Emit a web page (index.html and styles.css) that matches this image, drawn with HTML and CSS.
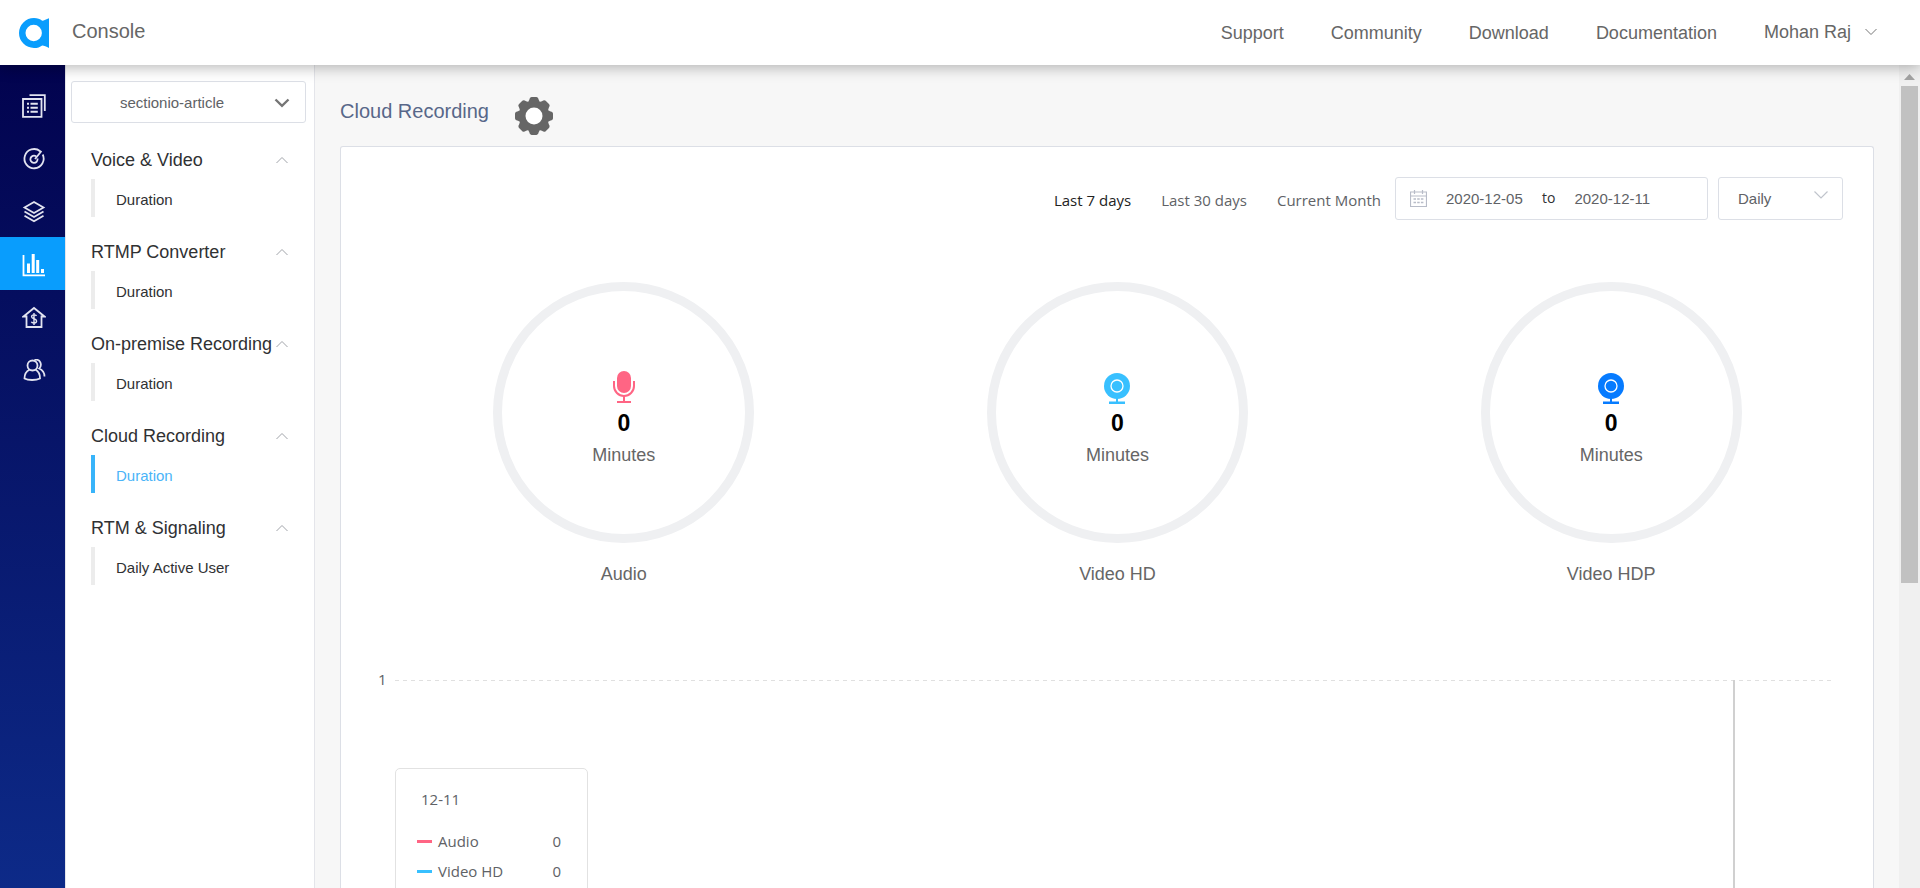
FILE: index.html
```html
<!DOCTYPE html>
<html lang="en">
<head>
<meta charset="utf-8">
<title>Console</title>
<link rel="stylesheet" href="styles.css">
</head>
<body>
<header class="topbar">
  <a class="brand" href="#" aria-label="Home">
    <svg width="30" height="30" viewBox="0 0 30 30"><path fill="#099dfd" fill-rule="evenodd" d="M15 0C18.500 0 21 1 23.200 2.700C25 2.600 27.500 1.500 30 .3V29.900C27.500 28.700 25 27.500 23.200 27.400C21 29 18.500 30 15 30A15 15 0 0 1 15 0ZM14.700 6.800A8.200 8.200 0 1 0 14.700 23.200A8.200 8.200 0 0 0 14.700 6.800Z"/></svg>
  </a>
  <span class="product">Console</span>
  <nav class="topnav">
    <a href="#">Support</a>
    <a href="#">Community</a>
    <a href="#">Download</a>
    <a href="#">Documentation</a>
    <button class="account" type="button">Mohan Raj
      <svg width="12" height="8" viewBox="0 0 12 8"><path d="M.5 1L6 6.500L11.500 1" fill="none" stroke="#777"/></svg>
    </button>
  </nav>
</header>
<div class="shell">
  <nav class="rail" aria-label="Sections">
    <a href="#" aria-label="Projects"><svg width="24" height="24" viewBox="0 0 24 24"><path d="M7.500 1.200H22.800V17M1 5H19.500V22.800H1Z"/><path d="M5 9.800H7M8.500 9.800H15.800M5 13.800H7M8.500 13.800H15.800M5 17.800H7M8.500 17.800H15.800" stroke-width="2"/></svg></a>
    <a href="#" aria-label="Dashboard"><svg width="24" height="24" viewBox="0 0 24 24"><path d="M18.200 4.300A9.600 9.600 0 1 0 20.700 7.500M14 9.300A3.600 3.600 0 1 0 15.500 11.500M13 12L19.500 4"/></svg></a>
    <a href="#" aria-label="Products"><svg width="24" height="24" viewBox="0 0 24 24"><path d="M12 2L21.500 7.500L12 13L2.500 7.500ZM2.500 11.500L12 17L21.500 11.500M2.500 15.800L12 21.300L21.500 15.800"/></svg></a>
    <a class="current" href="#" aria-label="Usage"><svg width="24" height="24" viewBox="0 0 24 24"><path d="M1.500 2V22.300H23"/><path d="M6.500 10.500V20M11.200 1V20M15.700 7V20M20.500 16V20" stroke-width="3"/></svg></a>
    <a href="#" aria-label="Billing"><svg width="24" height="24" viewBox="0 0 24 24"><path d="M4.500 10.500H1.500L12 2L22.500 10.500H19.500V21H4.500Z"/><path d="M14.500 9.800C13.800 8.600 9.600 8.300 9.600 10.700C9.600 13.200 14.600 12.300 14.600 15C14.600 17.600 10 17.400 9.300 15.800M12 7V19" stroke-width="1.400"/></svg></a>
    <a href="#" aria-label="Members"><svg width="24" height="24" viewBox="0 0 24 24"><path d="M10.500 1.500A5 5 0 1 1 10.500 11.500A5 5 0 1 1 10.500 1.500M7.500 10.800C4 12.500 2.500 15.500 2.500 19.500C6 21.500 14 21.500 18 19.500C18 15.500 17 12.500 13.500 10.800M12.500 .9C18.500 -.4 20.500 6 17.200 9.500C20.500 11 22.500 14 22.500 17.500"/></svg></a>
  </nav>
  <aside class="sidebar">
    <div class="project">
      <select class="project-select" aria-label="Project"><option>sectionio-article</option></select>
      <svg class="project-arrow" width="16" height="10" viewBox="0 0 16 10"><path d="M1.500 1.500L8 7.800L14.500 1.500" fill="none" stroke="#757575" stroke-width="2.400"/></svg>
    </div>
    <ul class="menu">
      <li class="group"><button class="group-head" type="button">Voice &amp; Video<svg width="12" height="8" viewBox="0 0 12 8"><path d="M.5 7L6 1.500L11.500 7"/></svg></button><a class="entry" href="#">Duration</a></li>
      <li class="group"><button class="group-head" type="button">RTMP Converter<svg width="12" height="8" viewBox="0 0 12 8"><path d="M.5 7L6 1.500L11.500 7"/></svg></button><a class="entry" href="#">Duration</a></li>
      <li class="group"><button class="group-head" type="button">On-premise Recording<svg width="12" height="8" viewBox="0 0 12 8"><path d="M.5 7L6 1.500L11.500 7"/></svg></button><a class="entry" href="#">Duration</a></li>
      <li class="group"><button class="group-head" type="button">Cloud Recording<svg width="12" height="8" viewBox="0 0 12 8"><path d="M.5 7L6 1.500L11.500 7"/></svg></button><a class="entry selected" href="#">Duration</a></li>
      <li class="group"><button class="group-head" type="button">RTM &amp; Signaling<svg width="12" height="8" viewBox="0 0 12 8"><path d="M.5 7L6 1.500L11.500 7"/></svg></button><a class="entry" href="#">Daily Active User</a></li>
    </ul>
  </aside>
  <main class="content">
    <div class="title-row">
      <h1>Cloud Recording</h1>
      <button class="settings" type="button" aria-label="Settings">
        <svg width="38" height="38" viewBox="-19 -19 38 38"><g fill="#666"><circle r="14.500"/><path id="tooth" d="M-7-12L-4.800-16Q-4.300-19-2.500-19H2.500Q4.300-19 4.800-16L7-12Z"/><use href="#tooth" transform="rotate(45)"/><use href="#tooth" transform="rotate(90)"/><use href="#tooth" transform="rotate(135)"/><use href="#tooth" transform="rotate(180)"/><use href="#tooth" transform="rotate(225)"/><use href="#tooth" transform="rotate(270)"/><use href="#tooth" transform="rotate(315)"/></g><circle r="8.500" fill="#fff"/></svg>
      </button>
    </div>
    <section class="card">
      <div class="toolbar">
        <div class="presets">
          <button class="preset chosen" type="button">Last 7 days</button>
          <button class="preset" type="button">Last 30 days</button>
          <button class="preset" type="button">Current Month</button>
        </div>
        <div class="range">
          <svg width="17" height="17" viewBox="0 0 17 17"><path d="M.5 2H16.500V16.500H.5ZM.5 6H16.500M4.500 0V4M12.500 0V4" fill="none" stroke="#b8bcc8" stroke-width="1.200"/><path d="M3.500 9H13.500M3.500 12.500H13.500" stroke="#b8bcc8" stroke-width="1.600" stroke-dasharray="2.500 1.200"/></svg>
          <input type="text" value="2020-12-05" aria-label="Start date">
          <span>to</span>
          <input type="text" value="2020-12-11" aria-label="End date">
        </div>
        <div class="interval">
          <select class="interval-select" aria-label="Interval"><option>Daily</option></select>
          <svg class="interval-arrow" width="14" height="8" viewBox="0 0 14 8"><path d="M.5 .5L7 7L13.500 .5" fill="none" stroke="#c0c4cc" stroke-width="1.200"/></svg>
        </div>
      </div>
      <div class="gauges">
        <figure class="gauge">
          <div class="ring">
            <svg width="28" height="34" viewBox="0 0 28 34" fill="#ff6584"><rect x="7" y="1" width="14" height="22" rx="7"/><path d="M4 11V16A10 10 0 0 0 24 16V11" fill="none" stroke="#ff6584" stroke-width="2"/><path d="M13 26H15V31H21V33H7V31H13Z"/></svg>
            <strong>0</strong><span>Minutes</span>
          </div>
          <figcaption>Audio</figcaption>
        </figure>
        <figure class="gauge">
          <div class="ring">
            <svg width="28" height="34" viewBox="0 0 28 34" fill="#38c0ff"><circle cx="14" cy="16" r="13"/><circle cx="14" cy="16" r="6" fill="none" stroke="#fff" stroke-width="1.300"/><path d="M13 28H15V31.500H22V34H6V31.500H13Z"/></svg>
            <strong>0</strong><span>Minutes</span>
          </div>
          <figcaption>Video HD</figcaption>
        </figure>
        <figure class="gauge">
          <div class="ring">
            <svg width="28" height="34" viewBox="0 0 28 34" fill="#067bff"><circle cx="14" cy="16" r="13"/><circle cx="14" cy="16" r="6" fill="none" stroke="#fff" stroke-width="1.300"/><path d="M13 28H15V31.500H22V34H6V31.500H13Z"/></svg>
            <strong>0</strong><span>Minutes</span>
          </div>
          <figcaption>Video HDP</figcaption>
        </figure>
      </div>
      <div class="chart">
        <span class="tick">1</span>
        <div class="plot">
          <svg class="gridline" width="100%" height="1"><line x1="0" y1="0" x2="100%" y2="0" stroke="#e0e0e0" stroke-width="2" stroke-dasharray="4 4"/></svg>
          <div class="pointer"></div>
          <div class="tooltip">
            <div class="tooltip-date">12-11</div>
            <div class="tooltip-row"><i class="swatch audio"></i>Audio<b>0</b></div>
            <div class="tooltip-row"><i class="swatch hd"></i>Video HD<b>0</b></div>
          </div>
        </div>
      </div>
    </section>
  </main>
  <div class="scrollbar">
    <svg width="11" height="6" viewBox="0 0 11 6"><path d="M0 6L5.500 0L11 6Z" fill="#a3a3a3"/></svg>
    <div class="thumb"></div>
  </div>
</div>
</body>
</html>
```
FILE: styles.css
```css
* { box-sizing: border-box; }
body {
  margin: 0;
  height: 100vh;
  display: flex;
  flex-direction: column;
  overflow: hidden;
  font-family: "Liberation Sans", Arial, sans-serif;
  font-size: 15px;
  color: #606266;
  background: #fff;
}
a { color: inherit; text-decoration: none; }
button, select, input {
  margin: 0;
  padding: 0;
  border: 0;
  background: none;
  font: inherit;
  color: inherit;
}
select { appearance: none; }
svg { display: block; flex: none; }

.topbar {
  position: relative;
  z-index: 2;
  flex: none;
  height: 65px;
  padding: 0 43px 0 19px;
  display: flex;
  align-items: center;
  background: #fff;
  box-shadow: 0 2px 14px rgba(0, 0, 0, .3);
}
.product { margin-left: 23px; padding-bottom: 2px; font-size: 20px; color: #666; }
.topnav {
  margin-left: auto;
  padding-top: 1px;
  display: flex;
  align-items: center;
  gap: 47px;
  font-size: 18px;
  color: #666;
}
.account { display: flex; align-items: center; gap: 14px; padding-bottom: 2px; }

.shell { flex: 1; min-height: 0; display: flex; }
.rail {
  flex: none;
  width: 65px;
  padding-top: 13px;
  background: linear-gradient(#02034f, #0d2a88);
}
.rail a {
  height: 53px;
  padding: 3px 0 0 2px;
  display: flex;
  align-items: center;
  justify-content: center;
}
.rail .current { background: #099dfd; }
.rail svg { fill: none; stroke: #e2e3f0; stroke-width: 1.8; }
.rail .current svg { stroke: #fff; }

.sidebar {
  flex: none;
  width: 250px;
  padding: 16px 8px 0 5px;
  border: solid #e4e5ea;
  border-width: 0 1px;
}
.project { position: relative; }
.project-select {
  width: 100%;
  height: 42px;
  padding-right: 33px;
  border: 1px solid #dcdfe6;
  border-radius: 3px;
  background: #fff;
  text-align-last: center;
}
.project-arrow { position: absolute; right: 16px; top: 17px; pointer-events: none; }
.menu { list-style: none; margin: 18px 0 0; padding: 0 18px 0 20px; }
.group { height: 92px; }
.group-head {
  width: 100%;
  height: 38px;
  display: flex;
  align-items: center;
  justify-content: space-between;
  font-size: 18px;
  color: #303133;
}
.group-head svg { fill: none; stroke: #a0a3a9; }
.entry {
  height: 38px;
  padding: 2px 0 0 21px;
  display: flex;
  align-items: center;
  border-left: 4px solid #ececec;
  color: #303133;
}
.entry.selected { border-color: #38b4fa; color: #4ab4f8; }

.content {
  flex: 1;
  min-width: 0;
  padding: 0 25px;
  display: flex;
  flex-direction: column;
  background: #f7f7f7;
}
.title-row {
  flex: none;
  height: 81px;
  padding-top: 32px;
  display: flex;
  align-items: flex-start;
  gap: 26px;
}
.title-row h1 {
  margin: 0;
  font-size: 20px;
  line-height: 28px;
  font-weight: normal;
  color: #586789;
}
.card {
  flex: 1;
  min-height: 0;
  padding-top: 30px;
  display: flex;
  flex-direction: column;
  border: 1px solid #dcdfe6;
  border-bottom: 0;
  border-radius: 3px 3px 0 0;
  background: #fff;
}
.toolbar {
  flex: none;
  padding-right: 30px;
  display: flex;
  justify-content: flex-end;
  gap: 10px;
}
.presets {
  display: flex;
  align-items: center;
  gap: 30px;
  padding: 3px 4px 0 0;
  font-family: "Open Sans", "Noto Sans", sans-serif;
}
.preset.chosen { color: #222; }
.range, .interval-select {
  height: 43px;
  border: 1px solid #dcdfe6;
  border-radius: 3px;
  background: #fff;
}
.range { width: 313px; padding-left: 14px; display: flex; align-items: center; }
.range input { width: 96px; padding-left: 19px; }
.range span {
  padding: 0 0 3px 19px;
  font-family: "Open Sans", "Noto Sans", sans-serif;
  font-size: 14px;
  color: #303133;
}
.interval { position: relative; width: 125px; }
.interval-select { width: 100%; padding-left: 19px; }
.interval-arrow { position: absolute; right: 15px; top: 14px; pointer-events: none; }

.gauges {
  flex: none;
  margin-top: 62px;
  padding: 0 15px 0 36px;
  display: grid;
  grid-template-columns: repeat(3, 1fr);
  font-size: 18px;
  line-height: 24px;
  color: #666;
}
.gauge { margin: 0; display: flex; flex-direction: column; align-items: center; gap: 19px; }
.ring {
  width: 261px;
  height: 261px;
  padding-top: 79px;
  display: flex;
  flex-direction: column;
  align-items: center;
  border: 9px solid #eff0f2;
  border-radius: 50%;
}
.ring strong { margin-top: 5px; font-size: 23px; line-height: 28px; color: #000; }
.ring span { margin-top: 6px; }

.chart {
  flex: 1;
  min-height: 0;
  margin-top: 81px;
  padding: 0 39px 0 37px;
  display: flex;
  font-family: "Open Sans", "Noto Sans", sans-serif;
  line-height: 24px;
}
.tick { width: 17px; }
.plot { position: relative; flex: 1; margin-top: 13px; }
.pointer { position: absolute; left: 93%; top: 0; bottom: 0; width: 2px; background: #d0d0d0; }
.tooltip {
  position: absolute;
  left: 0;
  top: 88px;
  width: 193px;
  padding: 18px 26px 30px 21px;
  border: 1px solid #e2e2e2;
  border-radius: 5px;
  background: #fff;
}
.tooltip-date { padding-left: 4px; margin-bottom: 15px; }
.tooltip-row { display: flex; align-items: center; height: 30px; }
.tooltip-row b { margin-left: auto; font-weight: normal; }
.swatch { width: 15px; height: 3px; margin-right: 6px; }
.swatch.audio { background: #ff6584; }
.swatch.hd { background: #38c0ff; }

.scrollbar {
  flex: none;
  width: 21px;
  padding: 9px 2px 0;
  display: flex;
  flex-direction: column;
  align-items: center;
  gap: 6px;
  background: #f0f0f0;
}
.thumb { width: 100%; height: 61%; background: #c1c1c1; }
```
